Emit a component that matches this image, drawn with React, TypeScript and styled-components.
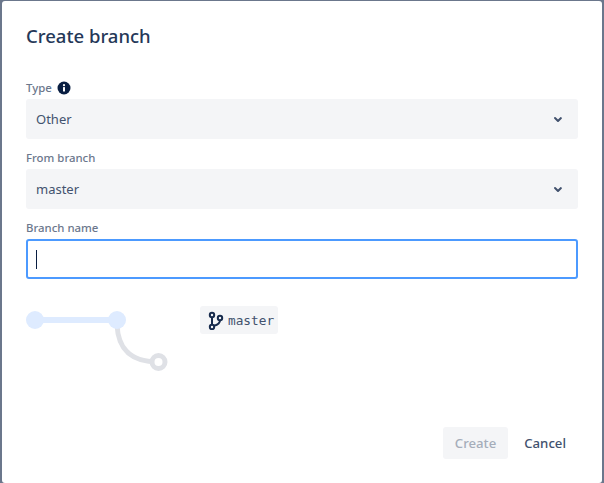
import styled, { createGlobalStyle } from "styled-components";

const GlobalStyle = createGlobalStyle`
  html, body {
    margin: 0;
    padding: 0;
    height: 100%;
    background: #6b778c;
  }
  #root {
    height: 100%;
  }
`;

const Chevron = () => (
  <ChevronIcon width="24" height="24" viewBox="0 0 24 24">
    <path
      d="M8.3 10.3a1 1 0 0 1 1.4 0l2.3 2.3 2.3-2.3a1 1 0 0 1 1.4 1.4l-3 3a1 1 0 0 1-1.4 0l-3-3a1 1 0 0 1 0-1.4z"
      fill="#42526e"
    />
  </ChevronIcon>
);

const SelectField = ({ value }: { value: string }) => (
  <Select>
    <span>{value}</span>
    <Chevron />
  </Select>
);

export default function App() {
  return (
    <Page>
      <GlobalStyle />
      <Modal>
        <Title>Create branch</Title>
        <Form>
          <Label>
            Type
            <InfoIcon width="14" height="14" viewBox="0 0 14 14">
              <circle cx="7" cy="7" r="6.5" fill="#091e42" />
              <rect x="6" y="6" width="2" height="4.5" rx="0.5" fill="#fff" />
              <circle cx="7" cy="4.2" r="1.1" fill="#fff" />
            </InfoIcon>
          </Label>
          <SelectField value="Other" />
          <Label>From branch</Label>
          <SelectField value="master" />
          <Label>Branch name</Label>
          <NameInput>
            <Caret />
          </NameInput>
        </Form>
        <Preview>
          <Graph width="146" height="64" viewBox="0 0 146 64">
            <path d="M91 14c1 20 10 37 41 37" fill="none" stroke="#dfe1e6" strokeWidth="5" />
            <circle cx="132.5" cy="51" r="6.5" fill="#fff" stroke="#dfe1e6" strokeWidth="5" />
            <rect x="9" y="6" width="82" height="6" fill="#deebff" />
            <circle cx="9" cy="9" r="9" fill="#deebff" />
            <circle cx="91" cy="9" r="9" fill="#deebff" />
          </Graph>
          <BranchTag>
            <svg width="16" height="20" viewBox="0 0 16 20">
              <g fill="none" stroke="#172b4d" strokeWidth="2">
                <circle cx="4" cy="5" r="2.2" />
                <circle cx="4" cy="17" r="2.2" />
                <circle cx="12" cy="8" r="2.2" />
                <path d="M4 7v8M12 10.2c0 3-2.5 4.6-6 5.6" />
              </g>
            </svg>
            master
          </BranchTag>
        </Preview>
        <Footer>
          <CreateButton>Create</CreateButton>
          <CancelButton>Cancel</CancelButton>
        </Footer>
      </Modal>
    </Page>
  );
}

const Page = styled.div`
  box-sizing: border-box;
  height: 483px;
  width: 604px;
  padding: 1px 2px 0;
  font-family: "Noto Sans", sans-serif;
`;

const Modal = styled.div`
  box-sizing: border-box;
  height: 100%;
  background: #fff;
  border-radius: 3px;
  padding: 0 24px;
  display: flex;
  flex-direction: column;
`;

const Title = styled.h1`
  margin: 0;
  padding-top: 21px;
  height: 68px;
  box-sizing: border-box;
  font-size: 18.5px;
  line-height: 28px;
  font-weight: 500;
  color: #253858;
`;

const Form = styled.div`
  display: flex;
  flex-direction: column;
`;

const Label = styled.div`
  display: flex;
  align-items: center;
  gap: 5px;
  height: 30px;
  padding: 9px 0 1px;
  box-sizing: border-box;
  font-size: 11.4px;
  font-weight: 500;
  color: #6b778c;
  line-height: 20px;
`;

const InfoIcon = styled.svg`
  display: block;
`;

const Select = styled.div`
  box-sizing: border-box;
  height: 40px;
  display: flex;
  align-items: center;
  justify-content: space-between;
  padding: 0 8px 0 10px;
  background: #f4f5f7;
  border-radius: 3px;
  font-size: 13px;
  color: #42526e;
`;

const ChevronIcon = styled.svg`
  display: block;
`;

const NameInput = styled.div`
  box-sizing: border-box;
  height: 40px;
  display: flex;
  align-items: center;
  padding-left: 8px;
  background: #fff;
  border: 2px solid #4c9aff;
  border-radius: 3px;
`;

const Caret = styled.span`
  display: block;
  width: 1px;
  height: 19px;
  background: #091e42;
`;

const Preview = styled.div`
  display: flex;
  align-items: flex-start;
  gap: 28px;
  margin-top: 27px;
`;

const Graph = styled.svg`
  display: block;
  margin-top: 5px;
`;

const BranchTag = styled.div`
  display: flex;
  align-items: center;
  gap: 4px;
  height: 28px;
  padding: 0 4px 0 8px;
  background: #f4f5f7;
  border-radius: 3px;
  font-family: "DejaVu Sans Mono", monospace;
  font-size: 12.75px;
  color: #42526e;
`;

const Footer = styled.div`
  margin-top: auto;
  margin-bottom: 24px;
  display: flex;
  justify-content: flex-end;
  align-items: center;
  gap: 4px;
`;

const CreateButton = styled.div`
  height: 32px;
  padding: 0 12px;
  display: flex;
  align-items: center;
  background: #f4f5f7;
  border-radius: 3px;
  font-size: 13.2px;
  font-weight: 500;
  color: #a5adba;
`;

const CancelButton = styled(CreateButton)`
  background: transparent;
  color: #42526e;
`;
